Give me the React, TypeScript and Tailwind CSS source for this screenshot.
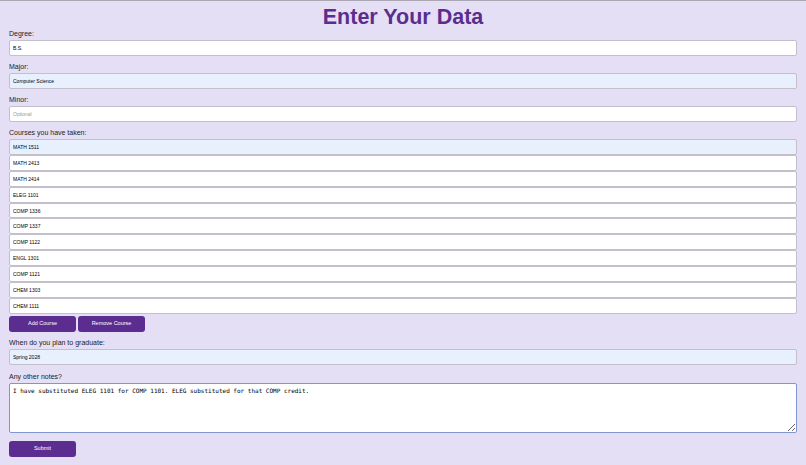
import type React from "react"

const courses = [
  "MATH 1511",
  "MATH 2413",
  "MATH 2414",
  "ELEG 1101",
  "COMP 1336",
  "COMP 1337",
  "COMP 1122",
  "ENGL 1301",
  "COMP 1121",
  "CHEM 1303",
  "CHEM 1111",
]

const inputBase =
  "block w-full h-4 border border-[#c3c0cc] rounded-[2px] px-[3px] text-[5px] text-black outline-none placeholder:text-[#9a9a9a]"

const Label: React.FC<{ children: React.ReactNode; className?: string }> = ({ children, className }) => (
  <label className={`block text-[7px] leading-[12px] text-[#222] ${className ?? "mt-[5px]"}`}>{children}</label>
)

const PurpleButton: React.FC<{ children: React.ReactNode }> = ({ children }) => (
  <button
    type="button"
    className="w-[67px] h-4 rounded-[3px] bg-[#5c2d91] text-white text-[5.5px] leading-none"
  >
    {children}
  </button>
)

export default function App() {
  return (
    <div className="min-h-[465px] bg-[#e5dff5] border-t border-[#aaa6b4] px-[9px] font-['Liberation_Sans',Arial,sans-serif]">
      <h1 className="pt-[5px] text-center text-[21.5px] leading-[22px] font-bold text-[#5b2d8e]">Enter Your Data</h1>

      <form onSubmit={(e) => e.preventDefault()}>
        <Label className="mt-0">Degree:</Label>
        <input className={`${inputBase} bg-white`} defaultValue="B.S." />

        <Label>Major:</Label>
        <input className={`${inputBase} bg-[#e8f0fe]`} defaultValue="Computer Science" />

        <Label>Minor:</Label>
        <input className={`${inputBase} bg-white`} placeholder="Optional" />

        <Label>Courses you have taken:</Label>
        <div className="flex flex-col">
          {courses.map((c, i) => (
            <input
              key={c}
              className={`${inputBase} h-[15.9px] ${i === 0 ? "bg-[#e8f0fe]" : "bg-white"}`}
              defaultValue={c}
            />
          ))}
        </div>

        <div className="flex gap-[2px] mt-[2px]">
          <PurpleButton>Add Course</PurpleButton>
          <PurpleButton>Remove Course</PurpleButton>
        </div>

        <Label>When do you plan to graduate:</Label>
        <input className={`${inputBase} bg-[#e8f0fe]`} defaultValue="Spring 2028" />

        <Label className="mt-[6px]">Any other notes?</Label>
        <textarea
          className="block w-full h-[50px] border border-[#8196cf] rounded-[2px] bg-white px-[3px] py-[3px] font-['DejaVu_Sans_Mono',monospace] text-[6px] leading-[8px] text-black outline-none"
          defaultValue="I have substituted ELEG 1101 for COMP 1101. ELEG substituted for that COMP credit."
        />

        <div className="flex mt-[8px]">
          <PurpleButton>Submit</PurpleButton>
        </div>
      </form>
    </div>
  )
}
